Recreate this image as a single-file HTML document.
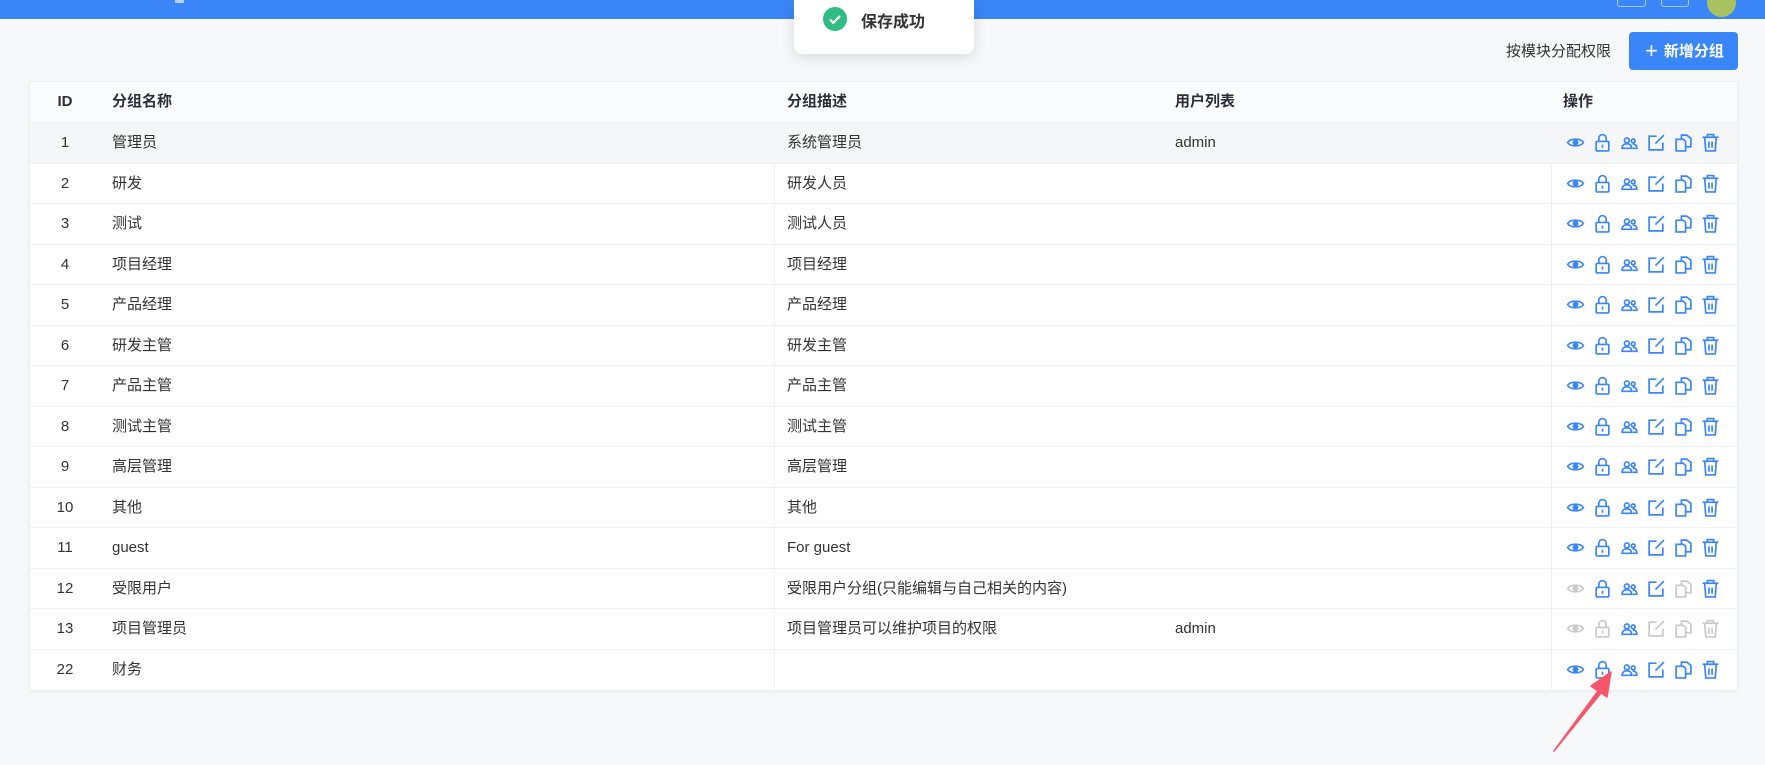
<!DOCTYPE html>
<html><head><meta charset="utf-8"><style>
*{box-sizing:border-box;margin:0;padding:0}
body{width:1765px;height:765px;background:#f7f8fa;font-family:"Liberation Sans","Noto Sans CJK SC",sans-serif;color:#333;position:relative;overflow:hidden;font-size:15px}
.top{position:absolute;left:0;top:0;width:1765px;height:19px;background:#3a86f8}
.toast{position:absolute;left:794px;top:0;width:180px;height:54px;background:#fff;border-radius:0 0 8px 8px;box-shadow:0 4px 14px rgba(0,0,0,.12)}
.perm{position:absolute;left:1506px;top:40px;font-size:15px;color:#333}
.btn{position:absolute;left:1629px;top:32px;width:109px;height:38px;background:#3a86f8;border-radius:4px;color:#fff;font-size:15px;font-weight:bold;line-height:38px;padding-left:16px}
.tbl{position:absolute;left:29px;top:81px;width:1709px;background:#fff;border:1px solid #ebeef2;box-shadow:0 1px 4px rgba(0,0,0,.04)}
.r{position:relative;height:40.5px;border-bottom:1px solid #eef0f3;line-height:40px}
.r:last-child{border-bottom:none}
.h{background:#fbfcfd;font-weight:bold;height:41px;color:#2a2f3a}
.r span{position:absolute;top:0}
.c0{left:0;width:70px;text-align:center}
.c1{left:82px}.c2{left:757px}.c3{left:1145px}.c4{left:1533px}
.vl{position:absolute;top:0;bottom:0;width:1px;background:#eef0f3}
.ic{position:absolute;top:10px;left:1536px;display:flex;gap:8px}
.ic svg{width:19px;height:19px;fill:none;stroke:#3a86f8;stroke-width:1.6;color:#3a86f8}
.ic svg.d{stroke:#c9c9c9;color:#c9c9c9}
</style></head><body>
<svg width="0" height="0" style="position:absolute">
<symbol id="eye" viewBox="0 0 18 18"><path d="M1.5 9C4 4.8 14 4.8 16.5 9C14 13.2 4 13.2 1.5 9Z"/><circle cx="9" cy="9" r="2" fill="currentColor"/></symbol>
<symbol id="lock" viewBox="0 0 18 18"><rect x="3" y="8" width="12" height="9" rx="1"/><path d="M5.5 8V5a3.5 3.5 0 0 1 7 0v3M9 11v3"/></symbol>
<symbol id="usr" viewBox="0 0 18 18"><circle cx="6.5" cy="7" r="2.3"/><path d="M2 14.5c0-3 2-4.3 4.5-4.3s4.5 1.3 4.5 4.3z"/><circle cx="12.5" cy="7.5" r="1.8"/><path d="M12 10.5c2.4 0 4 1 4 4h-4"/></symbol>
<symbol id="edt" viewBox="0 0 18 18"><path d="M15 9v7H2V3h7"/><path d="M8 10l8-8"/></symbol>
<symbol id="cpy" viewBox="0 0 18 18"><path d="M2 6h7l2 2v9H2z"/><path d="M7 6V2h5l4 3v8h-5"/></symbol>
<symbol id="del" viewBox="0 0 18 18"><path d="M1.5 4h15M6 4V1.5h6V4M3.5 4l1 13h9l1-13M7.5 8v6M10.5 8v6"/></symbol>
</svg>
<div class="top"></div>
<div style="position:absolute;left:175px;top:0;width:9px;height:3px;background:#b8d0fb"></div>
<div style="position:absolute;left:1617px;top:-6px;width:29px;height:13px;border:1px solid #a9c8fb;border-radius:3px"></div>
<div style="position:absolute;left:1661px;top:-6px;width:28px;height:13px;border:1px solid #a9c8fb;border-radius:3px"></div>
<div style="position:absolute;left:1707px;top:-12px;width:29px;height:29px;border-radius:50%;background:#a8c260"></div>
<div class="toast"><svg style="position:absolute;left:29px;top:7px" width="24" height="24" viewBox="0 0 24 24"><circle cx="12" cy="12" r="12" fill="#2fbd83"/><path d="M7 12.5l3.3 3.3L17 9" stroke="#fff" stroke-width="2.2" fill="none"/></svg><span style="position:absolute;left:67px;top:8px;font-size:16px;font-weight:bold;color:#333">保存成功</span></div>
<div class="perm">按模块分配权限</div>
<div class="btn"><span style="font-size:22px;font-weight:normal;vertical-align:-2px;margin-right:6px">+</span>新增分组</div>
<div class="tbl">
<div class="vl" style="left:744px"></div><div class="vl" style="left:1521px"></div>
<div class="r h"><span class="c0">ID</span><span class="c1">分组名称</span><span class="c2">分组描述</span><span class="c3">用户列表</span><span class="c4">操作</span></div>
<div class="r" style="background:#f5f6f8"><span class="c0">1</span><span class="c1">管理员</span><span class="c2">系统管理员</span><span class="c3">admin</span><div class="ic"><svg><use href="#eye"/></svg><svg><use href="#lock"/></svg><svg><use href="#usr"/></svg><svg><use href="#edt"/></svg><svg><use href="#cpy"/></svg><svg><use href="#del"/></svg></div></div>
<div class="r"><span class="c0">2</span><span class="c1">研发</span><span class="c2">研发人员</span><div class="ic"><svg><use href="#eye"/></svg><svg><use href="#lock"/></svg><svg><use href="#usr"/></svg><svg><use href="#edt"/></svg><svg><use href="#cpy"/></svg><svg><use href="#del"/></svg></div></div>
<div class="r"><span class="c0">3</span><span class="c1">测试</span><span class="c2">测试人员</span><div class="ic"><svg><use href="#eye"/></svg><svg><use href="#lock"/></svg><svg><use href="#usr"/></svg><svg><use href="#edt"/></svg><svg><use href="#cpy"/></svg><svg><use href="#del"/></svg></div></div>
<div class="r"><span class="c0">4</span><span class="c1">项目经理</span><span class="c2">项目经理</span><div class="ic"><svg><use href="#eye"/></svg><svg><use href="#lock"/></svg><svg><use href="#usr"/></svg><svg><use href="#edt"/></svg><svg><use href="#cpy"/></svg><svg><use href="#del"/></svg></div></div>
<div class="r"><span class="c0">5</span><span class="c1">产品经理</span><span class="c2">产品经理</span><div class="ic"><svg><use href="#eye"/></svg><svg><use href="#lock"/></svg><svg><use href="#usr"/></svg><svg><use href="#edt"/></svg><svg><use href="#cpy"/></svg><svg><use href="#del"/></svg></div></div>
<div class="r"><span class="c0">6</span><span class="c1">研发主管</span><span class="c2">研发主管</span><div class="ic"><svg><use href="#eye"/></svg><svg><use href="#lock"/></svg><svg><use href="#usr"/></svg><svg><use href="#edt"/></svg><svg><use href="#cpy"/></svg><svg><use href="#del"/></svg></div></div>
<div class="r"><span class="c0">7</span><span class="c1">产品主管</span><span class="c2">产品主管</span><div class="ic"><svg><use href="#eye"/></svg><svg><use href="#lock"/></svg><svg><use href="#usr"/></svg><svg><use href="#edt"/></svg><svg><use href="#cpy"/></svg><svg><use href="#del"/></svg></div></div>
<div class="r"><span class="c0">8</span><span class="c1">测试主管</span><span class="c2">测试主管</span><div class="ic"><svg><use href="#eye"/></svg><svg><use href="#lock"/></svg><svg><use href="#usr"/></svg><svg><use href="#edt"/></svg><svg><use href="#cpy"/></svg><svg><use href="#del"/></svg></div></div>
<div class="r"><span class="c0">9</span><span class="c1">高层管理</span><span class="c2">高层管理</span><div class="ic"><svg><use href="#eye"/></svg><svg><use href="#lock"/></svg><svg><use href="#usr"/></svg><svg><use href="#edt"/></svg><svg><use href="#cpy"/></svg><svg><use href="#del"/></svg></div></div>
<div class="r"><span class="c0">10</span><span class="c1">其他</span><span class="c2">其他</span><div class="ic"><svg><use href="#eye"/></svg><svg><use href="#lock"/></svg><svg><use href="#usr"/></svg><svg><use href="#edt"/></svg><svg><use href="#cpy"/></svg><svg><use href="#del"/></svg></div></div>
<div class="r"><span class="c0">11</span><span class="c1">guest</span><span class="c2">For guest</span><div class="ic"><svg><use href="#eye"/></svg><svg><use href="#lock"/></svg><svg><use href="#usr"/></svg><svg><use href="#edt"/></svg><svg><use href="#cpy"/></svg><svg><use href="#del"/></svg></div></div>
<div class="r"><span class="c0">12</span><span class="c1">受限用户</span><span class="c2">受限用户分组(只能编辑与自己相关的内容)</span><div class="ic"><svg class="d"><use href="#eye"/></svg><svg><use href="#lock"/></svg><svg><use href="#usr"/></svg><svg><use href="#edt"/></svg><svg class="d"><use href="#cpy"/></svg><svg><use href="#del"/></svg></div></div>
<div class="r"><span class="c0">13</span><span class="c1">项目管理员</span><span class="c2">项目管理员可以维护项目的权限</span><span class="c3">admin</span><div class="ic"><svg class="d"><use href="#eye"/></svg><svg class="d"><use href="#lock"/></svg><svg><use href="#usr"/></svg><svg class="d"><use href="#edt"/></svg><svg class="d"><use href="#cpy"/></svg><svg class="d"><use href="#del"/></svg></div></div>
<div class="r"><span class="c0">22</span><span class="c1">财务</span><div class="ic"><svg><use href="#eye"/></svg><svg><use href="#lock"/></svg><svg><use href="#usr"/></svg><svg><use href="#edt"/></svg><svg><use href="#cpy"/></svg><svg><use href="#del"/></svg></div></div>
</div>
<svg style="position:absolute;left:0;top:0" width="1765" height="765"><polygon points="1554,751 1598,691 1591,686 1611,672 1607,697 1601,693" fill="#f5566a" stroke="#f5566a" stroke-width="1.5" stroke-linejoin="round"/></svg>
</body></html>
